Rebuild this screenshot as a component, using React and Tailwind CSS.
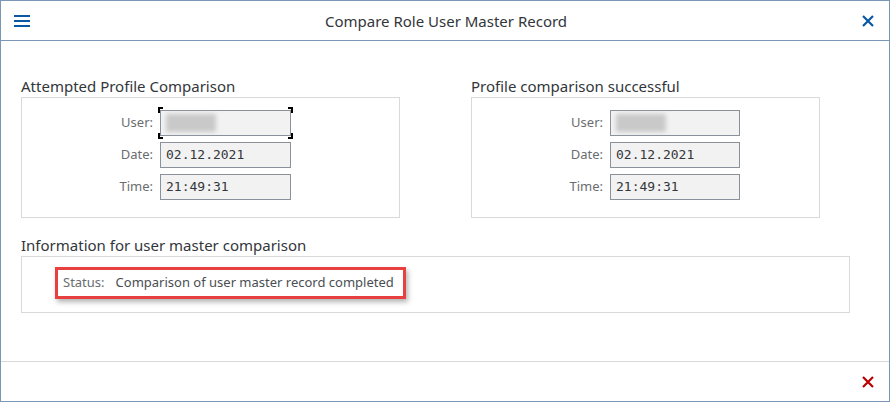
import React from "react";

const font = { fontFamily: '"Noto Sans", "Liberation Sans", Arial, sans-serif' };

function Blur() {
    return <div className="ml-[5px] h-[18px] w-[50px] rounded-[2px] bg-[#c9c9c9] blur-[2px]" />;
}

function Field({ label, value, width, focused }) {
    return (
        <div className="flex items-center h-[26px]">
            <div className="w-[132px] pr-[1px] text-right text-[13px] text-[#6a6d70]">{label}</div>
            <div
                className={
                    "relative ml-[6px] flex h-[26px] items-center border border-[#89919a] bg-[#f2f2f2] " + width
                }
            >
                {value ? (
                    <span
                        className="pl-[5px] text-[13px] text-[#32363a]"
                        style={{ fontFamily: '"DejaVu Sans Mono", "Liberation Mono", monospace' }}
                    >
                        {value}
                    </span>
                ) : (
                    <Blur />
                )}
                {focused && (
                    <>
                        <span className="absolute -left-[3px] -top-[4px] h-[6px] w-[5px] border-l-2 border-t-2 border-black" />
                        <span className="absolute -right-[3px] -top-[4px] h-[6px] w-[5px] border-r-2 border-t-2 border-black" />
                        <span className="absolute -left-[3px] -bottom-[4px] h-[6px] w-[5px] border-l-2 border-b-2 border-black" />
                        <span className="absolute -right-[3px] -bottom-[4px] h-[6px] w-[5px] border-r-2 border-b-2 border-black" />
                    </>
                )}
            </div>
        </div>
    );
}

function Group({ title, width, inputWidth, focused }) {
    return (
        <div className={width}>
            <div className="h-[19px] text-[15px] leading-[19px] text-[#32363a]">{title}</div>
            <div className="mt-[1px] flex h-[121px] flex-col gap-[6px] border border-[#d9d9d9] pt-[12px]">
                <Field label="User:" width={inputWidth} focused={focused} />
                <Field label="Date:" value="02.12.2021" width={inputWidth} />
                <Field label="Time:" value="21:49:31" width={inputWidth} />
            </div>
        </div>
    );
}

export default function App() {
    return (
        <div className="flex h-[402px] w-[890px] flex-col border border-[#7b97b6] bg-white" style={font}>
            <div className="flex h-[40px] shrink-0 items-center border-b border-[#7b97b6]">
                <div className="ml-[13px] flex w-[16px] flex-col gap-[3px]">
                    <span className="h-[2px] bg-[#0a57a4]" />
                    <span className="h-[2px] bg-[#0a57a4]" />
                    <span className="h-[2px] bg-[#0a57a4]" />
                </div>
                <div className="flex-1 pt-[2px] text-center text-[15px] text-[#32363a]">Compare Role User Master Record</div>
                <svg width="12" height="12" viewBox="0 0 12 12" className="mr-[15px]">
                    <path d="M1 1L11 11M11 1L1 11" stroke="#0a57a4" strokeWidth="2.2" />
                </svg>
            </div>

            <div className="flex-1 pl-[20px] pt-[36px]">
                <div className="flex gap-[71px]">
                    <Group title="Attempted Profile Comparison" width="w-[379px]" inputWidth="w-[131px]" focused />
                    <Group title="Profile comparison successful" width="w-[349px]" inputWidth="w-[130px]" />
                </div>

                <div className="mt-[18px] w-[829px]">
                    <div className="h-[19px] text-[15px] leading-[19px] text-[#32363a]">
                        Information for user master comparison
                    </div>
                    <div className="mt-[1px] h-[57px] border border-[#d9d9d9] pl-[33px] pt-[10px]">
                        <div className="flex h-[32px] w-[351px] items-center border-[3px] border-[#e8403f] pl-[5px] text-[13px] shadow-[2px_3px_5px_rgba(0,0,0,0.3)]">
                            <span className="text-[#6a6d70]">Status:</span>
                            <span className="ml-[11px] text-[#4a4e52]">Comparison of user master record completed</span>
                        </div>
                    </div>
                </div>
            </div>

            <div className="flex h-[40px] shrink-0 items-center justify-end border-t border-[#d9d9d9]">
                <svg width="12" height="12" viewBox="0 0 12 12" className="mr-[15px]">
                    <path d="M1 1L11 11M11 1L1 11" stroke="#bb0000" strokeWidth="2.2" />
                </svg>
            </div>
        </div>
    );
}
